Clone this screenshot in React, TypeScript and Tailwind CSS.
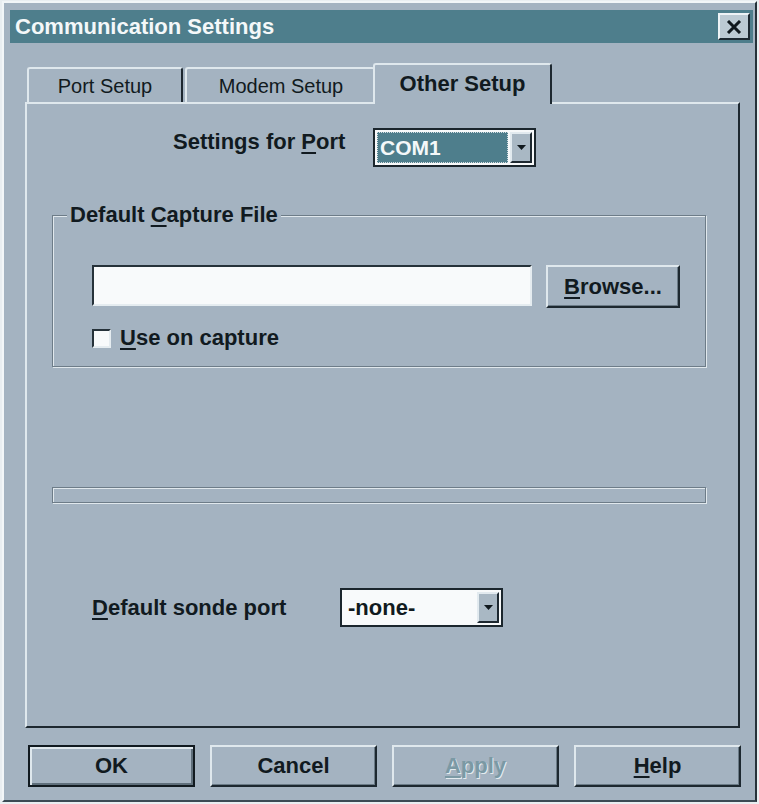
import React from "react";
import clsx from "clsx";

/**
 * Win95-style "Communication Settings" property sheet, Other Setup tab selected.
 */

function Hotkey({ children }: { children: React.ReactNode }) {
  return <span className="underline decoration-2 underline-offset-[3px]">{children}</span>;
}

function DropArrow() {
  return (
    <div className="flex w-[22px] items-center justify-center border-2 border-t-[#e2eaef] border-l-[#e2eaef] border-b-[#1d2830] border-r-[#1d2830] bg-[#a9b8c4]">
      <svg width="9" height="5" viewBox="0 0 9 5" aria-hidden>
        <path d="M0 0h9L4.5 5z" fill="#10181d" />
      </svg>
    </div>
  );
}

function DialogButton({
  children,
  isDefault,
  disabled,
  className = "h-[42px] w-[167px]",
}: {
  children: React.ReactNode;
  isDefault?: boolean;
  disabled?: boolean;
  className?: string;
}) {
  return (
    <button
      type="button"
      className={clsx(
        "flex shrink-0 items-center justify-center bg-[#a4b3c1] text-[22px] font-bold leading-none",
        className,
        isDefault
          ? "border-2 border-[#111a20] shadow-[inset_2px_2px_0_#dfe8ed,inset_-2px_-2px_0_#5f6f7b]"
          : "border-2 border-t-[#dfe8ed] border-l-[#dfe8ed] border-b-[#1d2830] border-r-[#1d2830] shadow-[inset_-1px_-1px_0_#6b7b87]",
        disabled ? "text-[#7b99a4] [text-shadow:1px_1px_0_#e3ebef]" : "text-[#111a20]"
      )}
    >
      {children}
    </button>
  );
}

export default function App() {
  return (
    <div className="h-[804px] w-[759px] overflow-hidden bg-[#e9eef1] pl-[2px] pt-[1px] font-['Liberation_Sans',Arial,sans-serif] text-[#111a20]">
      <div className="flex h-[801px] w-[755px] flex-col border-2 border-t-[#f2f6f8] border-l-[#f2f6f8] border-r-[#26323a] border-b-[#3b4a54] bg-[#a4b3c1] pl-[6px] pr-[2px] pt-[7px]">
        {/* title bar */}
        <div className="flex h-[33px] items-center justify-between bg-[#4e7e8c] pl-[5px] pr-[3px]">
          <span className="text-[22px] font-bold leading-none text-[#f4f8f9]">Communication Settings</span>
          <div className="flex h-[27px] w-[32px] items-center justify-center border-2 border-t-[#eef3f6] border-l-[#eef3f6] border-b-[#1d2830] border-r-[#1d2830] bg-[#bccad3]">
            <svg width="16" height="14" viewBox="0 0 16 14" aria-hidden>
              <path d="M2 1l12 12M14 1L2 13" stroke="#10181d" strokeWidth="3" />
            </svg>
          </div>
        </div>

        {/* tabs */}
        <div className="relative z-10 -mb-[2px] ml-[15px] mt-[20px] flex items-end pl-[2px]">
          <div className="mb-[2px] flex h-[35px] w-[156px] items-center justify-center rounded-t-[3px] border-2 border-b-0 border-t-[#dfe8ed] border-l-[#dfe8ed] border-r-[#1d2830] text-[20px] leading-none">
            Port Setup
          </div>
          <div className="mb-[2px] ml-[2px] flex h-[35px] w-[190px] items-center justify-center rounded-t-[3px] border-t-2 border-l-2 border-t-[#dfe8ed] border-l-[#dfe8ed] text-[20px] leading-none">
            Modem Setup
          </div>
          <div className="-ml-[2px] flex h-[41px] w-[179px] items-center justify-center rounded-t-[3px] border-2 border-b-0 border-t-[#dfe8ed] border-l-[#dfe8ed] border-r-[#1d2830] bg-[#a4b3c1] pb-[2px] text-[22px] font-bold leading-none">
            Other Setup
          </div>
        </div>

        {/* page */}
        <div className="ml-[15px] flex h-[626px] w-[715px] flex-col border-2 border-t-[#dfe8ed] border-l-[#dfe8ed] border-b-[#1d2830] border-r-[#1d2830]">
          <div className="mt-[24px] flex items-start pl-[146px]">
            <span className="mt-[3px] w-[200px] text-[22px] font-bold leading-none">
              Settings for <Hotkey>P</Hotkey>ort
            </span>
            <div className="flex h-[39px] w-[163px] border-2 border-[#1b262d] bg-[#f7f9fa] p-[2px]">
              <div className="mr-[2px] flex flex-1 items-center border border-dotted border-[#d5dee2] bg-[#4e7e8c] pl-[2px] text-[21px] font-bold leading-none text-[#f4f8f9]">
                COM1
              </div>
              <DropArrow />
            </div>
          </div>

          <fieldset className="ml-[25px] mt-[35px] w-[654px] min-w-0 border border-[#6d7c88] shadow-[inset_1px_1px_0_#e0e8ed,1px_1px_0_#e0e8ed]">
            <legend className="ml-[14px] bg-[#a4b3c1] px-[3px] text-[22px] font-bold leading-[26px]">
              Default <Hotkey>C</Hotkey>apture File
            </legend>
            <div className="pb-[17px] pl-[39px] pt-[37px]">
              <div className="flex items-start gap-[14px]">
                <div className="h-[41px] w-[440px] border-2 border-t-[#26323a] border-l-[#26323a] border-b-[#e5ecf0] border-r-[#e5ecf0] bg-[#f8fafb]" />
                <DialogButton className="h-[43px] w-[134px]">
                  <Hotkey>B</Hotkey>rowse...
                </DialogButton>
              </div>
              <div className="mt-[19px] flex items-center gap-[9px]">
                <div className="h-[19px] w-[19px] border-2 border-t-[#26323a] border-l-[#26323a] border-b-[#e5ecf0] border-r-[#e5ecf0] bg-[#f8fafb]" />
                <span className="text-[22px] font-bold leading-none">
                  <Hotkey>U</Hotkey>se on capture
                </span>
              </div>
            </div>
          </fieldset>

          <div className="ml-[25px] mt-[120px] h-[16px] w-[654px] border border-[#6d7c88] shadow-[inset_1px_1px_0_#e0e8ed,1px_1px_0_#e0e8ed]" />

          <div className="mt-[85px] flex items-center pl-[65px]">
            <span className="w-[248px] text-[22px] font-bold leading-none">
              <Hotkey>D</Hotkey>efault sonde port
            </span>
            <div className="flex h-[39px] w-[163px] border-2 border-[#1b262d] bg-[#f8fafb] p-[2px]">
              <div className="flex flex-1 items-center pl-[4px] text-[22px] font-bold leading-none">-none-</div>
              <DropArrow />
            </div>
          </div>
        </div>

        {/* dialog buttons */}
        <div className="ml-[18px] mt-[17px] flex gap-[15px]">
          <DialogButton isDefault>OK</DialogButton>
          <DialogButton>Cancel</DialogButton>
          <DialogButton disabled>
            <Hotkey>A</Hotkey>pply
          </DialogButton>
          <DialogButton>
            <Hotkey>H</Hotkey>elp
          </DialogButton>
        </div>
      </div>
    </div>
  );
}
